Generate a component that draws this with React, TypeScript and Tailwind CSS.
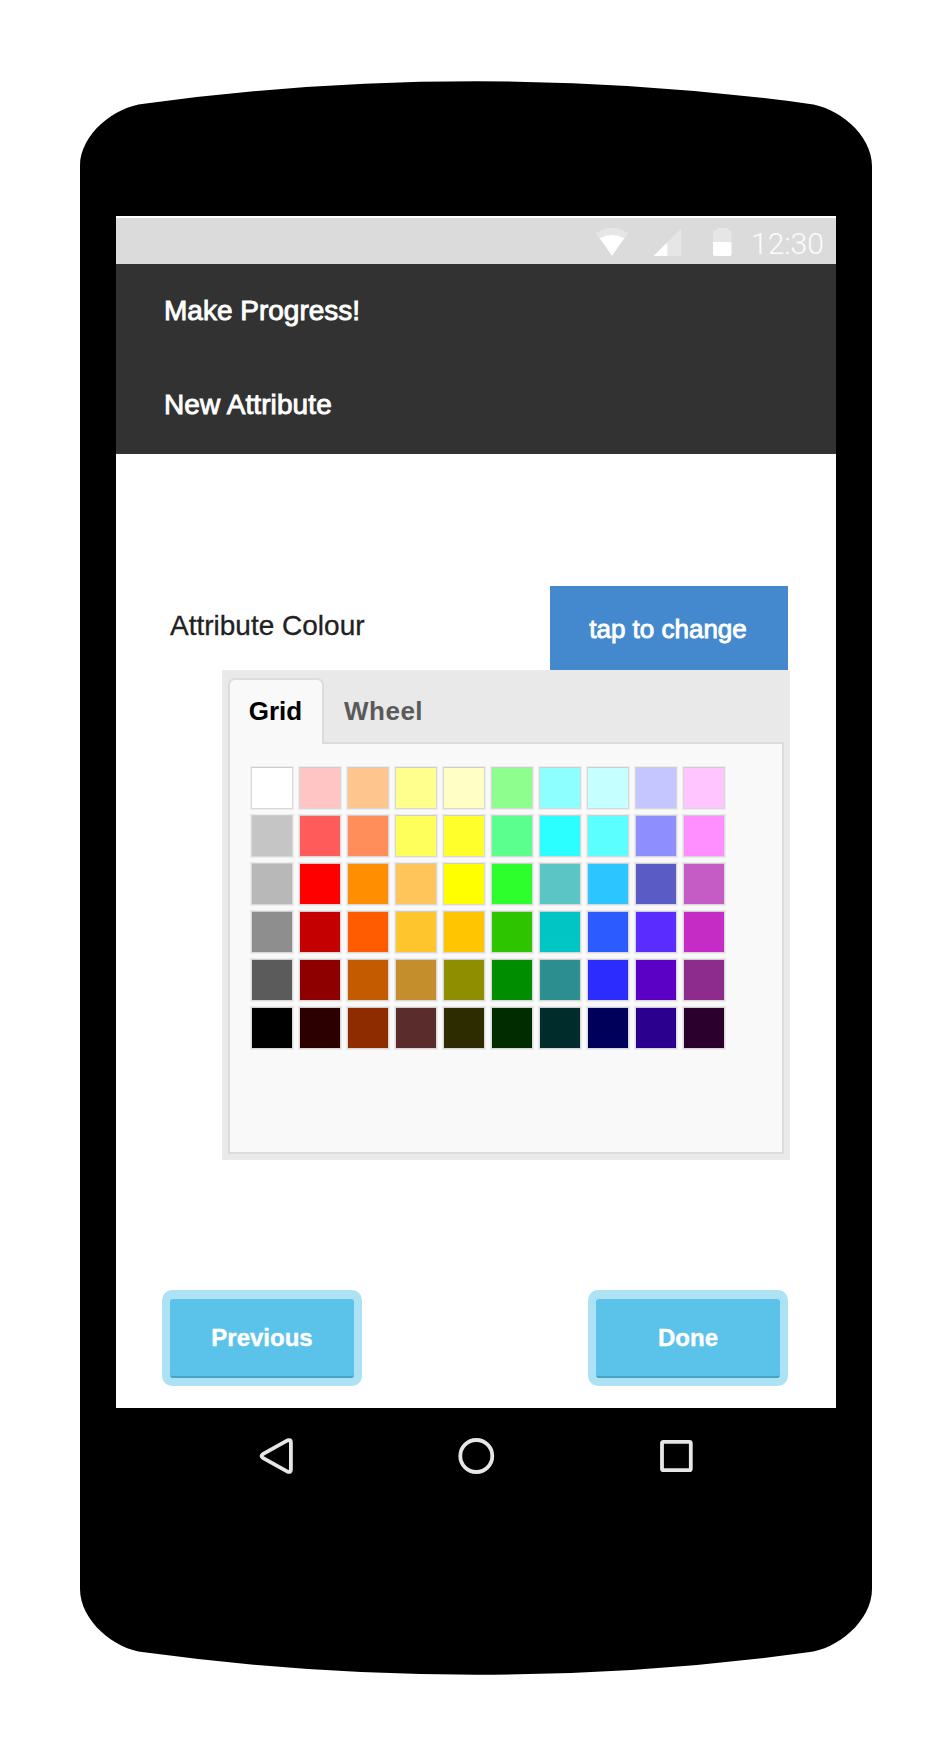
import React from "react";

const swatchRows: string[][] = [
  ["#ffffff", "#ffc4c4", "#ffc58e", "#ffff8e", "#ffffc5", "#8eff8e", "#8effff", "#c5ffff", "#c5c5ff", "#ffc5ff"],
  ["#c5c5c5", "#ff5b5b", "#ff8e5b", "#ffff5b", "#ffff2c", "#5bff8e", "#2cffff", "#5bffff", "#8e8eff", "#ff8eff"],
  ["#b8b8b8", "#ff0000", "#ff8e00", "#ffc55b", "#ffff00", "#2cff2c", "#5bc5c5", "#2cc5ff", "#5b5bc5", "#c55bc5"],
  ["#8e8e8e", "#c50000", "#ff5b00", "#ffc52c", "#ffc500", "#2cc500", "#00c5c5", "#2c5bff", "#5b2cff", "#c52cc5"],
  ["#5b5b5b", "#8e0000", "#c55b00", "#c58e2c", "#8e8e00", "#008e00", "#2c8e8e", "#2c2cff", "#5b00c5", "#8e2c8e"],
  ["#000000", "#2c0000", "#8e2c00", "#5b2c2c", "#2c2c00", "#002c00", "#002c2c", "#00005b", "#2c008e", "#2c002c"],
];

function StatusBar() {
  return (
    <div className="flex h-[48px] border-t-2 border-white bg-[#dbdbdb]">
      <svg className="ml-[480px] h-[46px] w-[140px] shrink-0" viewBox="596 218 140 46">
        <path d="M612 255.8 595.8 233.3Q612 222.8 628.2 233.3Z" fill="#e6e6e6" />
        <path d="M612 255.8 599.8 238.2Q612 231.8 624.2 238.2Z" fill="#fff" />
        <path d="M653.7 256 681.3 228.4V256Z" fill="#e6e6e6" />
        <path d="M653.7 256 667.3 242.4V256Z" fill="#fff" />
        <path d="M713 242V231.7Q713 230 714.7 230H717V228H727.5V230H730Q731.5 230 731.5 231.7V242Z" fill="#e6e6e6" />
        <path d="M713 242H731.5V254.3Q731.5 256 729.8 256H714.7Q713 256 713 254.3Z" fill="#fff" />
      </svg>
      <span className="ml-[15px] whitespace-nowrap pt-[3px] font-['Roboto'] text-[30px] leading-[46px] font-light text-[#fcfcfc]">
        12:30
      </span>
    </div>
  );
}

function Header() {
  return (
    <header className="h-[190px] bg-[#323232] pt-[1px] pl-[48px] text-[28px] text-white [-webkit-text-stroke:0.9px_white]">
      <h1 className="h-[92px] leading-[92px]">Make Progress!</h1>
      <h2 className="h-[96px] leading-[96px] tracking-[0.1px]">New Attribute</h2>
    </header>
  );
}

function ColourPicker() {
  return (
    <section className="ml-[106px] h-[490px] w-[568px] bg-[#e9e9e9] pt-[8px] pl-[6px]">
      <div className="flex h-[64px] text-[26px] font-bold">
        <button className="relative z-10 h-[66px] w-[96px] rounded-t-[7px] border-2 border-b-0 border-[#dcdcdc] bg-[#f9f9f9] pr-[1px] pb-[2px] font-bold text-black">
          Grid
        </button>
        <button className="pl-[20px] pt-[2px] font-bold tracking-[0.5px] text-[#5a5a5a]">Wheel</button>
      </div>
      <div className="h-[412px] w-[556px] border-2 border-[#dcdcdc] bg-[#f9f9f9] pt-[24px] pl-[22px]">
        <div className="grid w-max grid-cols-10 gap-[8px]">
          {swatchRows.flat().map((colour, i) => (
            <div
              key={i}
              className="size-[40px] shadow-[0_-1px_0_#cccccc,0_0_0_1px_#dadada,0_0_0_2px_#ececec]"
              style={{ backgroundColor: colour }}
            />
          ))}
        </div>
      </div>
    </section>
  );
}

function ActionButton({ label }: { label: string }) {
  return (
    <button className="h-[96px] w-[200px] rounded-[10px] bg-[#ade2f5] px-[8px] pt-[9px] pb-[8px] text-[24px] font-bold text-white">
      <span className="flex h-[79px] items-center justify-center rounded-[3px] border-b-2 border-[#46a3c5] bg-[#5bc2ea] [-webkit-text-stroke:0.4px_white]">
        {label}
      </span>
    </button>
  );
}

function NavigationBar() {
  return (
    <nav className="h-[96px]">
      <svg className="h-[96px] w-[720px]" viewBox="116 1408 720 96" fill="none" stroke="#e6e7e5" strokeWidth="3.8">
        <path d="M287.5 1440.4 262.8 1454.2Q260.4 1456 262.8 1457.8L287.5 1471.6Q290.8 1472.8 290.9 1469.8V1442.2Q290.8 1439.2 287.5 1440.4Z" strokeLinejoin="round" />
        <circle cx="476.3" cy="1456" r="16" />
        <rect x="662" y="1441.8" width="28.8" height="28.4" rx="1.5" />
      </svg>
    </nav>
  );
}

export default function App() {
  return (
    <main className="relative h-[1756px] w-[952px] bg-white px-[116px] pt-[216px] font-['Liberation_Sans',Arial,sans-serif]">
      <svg className="absolute inset-0 h-[1756px] w-[952px]" viewBox="0 0 952 1756">
        <path d="M80 166C80 134 115 106.5 144 103.7Q308 81.3 476 81.3T808 103.7C837 106.5 872 134 872 166V1589C872 1621 837 1649.5 808 1652.3Q644 1674.7 476 1674.7T144 1652.3C115 1649.5 80 1621 80 1589Z" />
      </svg>
      <div className="relative">
        <div className="h-[1192px] w-[720px] bg-white">
          <StatusBar />
          <Header />
          <div className="mt-[132px] flex h-[84px] items-center justify-between pr-[48px] pl-[54px]">
            <span className="pb-[4px] text-[28px] text-[#212121] [-webkit-text-stroke:0.3px_#212121]">Attribute Colour</span>
            <button className="h-[84px] w-[238px] bg-[#4488cd] pt-[2px] pr-[2px] text-[26px] text-white [-webkit-text-stroke:0.9px_white]">
              tap to change
            </button>
          </div>
          <ColourPicker />
          <div className="mt-[130px] flex justify-between pr-[48px] pl-[46px]">
            <ActionButton label="Previous" />
            <ActionButton label="Done" />
          </div>
        </div>
        <NavigationBar />
      </div>
    </main>
  );
}
